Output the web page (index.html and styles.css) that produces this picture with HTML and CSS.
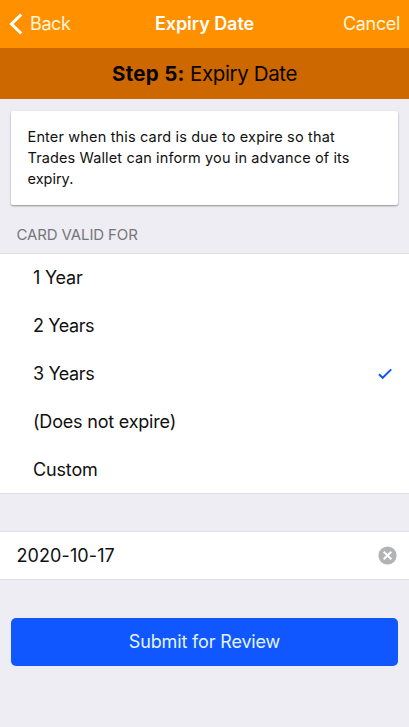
FILE: index.html
```html
<!DOCTYPE html>
<html lang="en">
<head>
<meta charset="utf-8">
<title>Expiry Date</title>
<link rel="stylesheet" href="styles.css">
</head>
<body>
<header class="nav">
  <a class="back"><svg width="14" height="22" viewBox="0 0 14 22"><path d="M12.2 1.5 2.5 11l9.7 9.5" fill="none" stroke="#fff" stroke-width="3"/></svg><span class="t">Back</span></a>
  <h1 class="t title">Expiry Date</h1>
  <a class="t cancel">Cancel</a>
</header>
<div class="step"><span class="t step-text"><b>Step 5:</b> Expiry Date</span></div>
<main>
  <p class="card"><span class="t l1">Enter when this card is due to expire so that</span><br><span class="t l2">Trades Wallet can inform you in advance of its</span><br><span class="t l3">expiry.</span></p>
  <h2 class="label"><span class="t label-text">CARD VALID FOR</span></h2>
  <ul class="list">
    <li><span class="t">1 Year</span></li>
    <li><span class="t years">2 Years</span></li>
    <li><span class="t years">3 Years</span><svg width="16" height="14" viewBox="0 0 16 14"><path d="M2 7.2 5.7 10.8 14.2 2.4" fill="none" stroke="#1155f5" stroke-width="2"/></svg></li>
    <li><span class="t wide">(Does not expire)</span></li>
    <li><span class="t custom">Custom</span></li>
  </ul>
  <div class="date"><span class="t">2020-10-17</span><svg width="19" height="19" viewBox="0 0 19 19"><circle cx="9.5" cy="9.5" r="9.1" fill="#b1b3b4"/><path d="m5.7 5.7 7.6 7.6M13.3 5.7l-7.6 7.6" stroke="#fff" stroke-width="2"/></svg></div>
  <button class="submit"><span class="t">Submit for Review</span></button>
</main>
</body>
</html>
```
FILE: styles.css
```css
* { box-sizing: border-box; }
body { margin: 0; height: 727px; overflow: hidden; background: #ededf3; color: #111; font-family: Inter, "Liberation Sans", sans-serif; font-size: 18px; }
.t { display: inline-block; white-space: nowrap; }
.nav { height: 48px; background: #ff9100; color: #fff; display: grid; grid-template-columns: 1fr auto 1fr; align-items: center; padding: 0 9px 1px; }
.back { display: flex; align-items: center; gap: 7px; letter-spacing: -0.4px; color: #fff6dc; }
.title { margin: 0; font-size: 18px; font-weight: 600; letter-spacing: -0.05px; }
.cancel { justify-self: end; letter-spacing: -0.35px; color: #fff6dc; }
.step { height: 51px; background: #cd6800; color: #080400; display: flex; align-items: center; justify-content: center; font-size: 20.5px; letter-spacing: -0.38px; }
.step b { letter-spacing: 0.3px; }
.card { margin: 12px 11px 0; height: 94px; padding: 15px 16.5px; background: #fff; border-radius: 2px; box-shadow: 0 1px 2px #0006; font-size: 14.5px; line-height: 21px; }
.l1 { letter-spacing: 0.16px; }
.l2 { letter-spacing: 0.12px; }
.label { margin: 0; height: 48px; padding: 20px 16.5px 0; font-size: 15px; line-height: 20px; font-weight: 400; letter-spacing: -0.12px; color: #77777b; }
.list { list-style: none; margin: 0; padding: 0; height: 241px; background: #fff; border-top: 1px solid #dfdfe4; border-bottom: 1px solid #dfdfe4; }
.list li { height: 48px; padding: 0 16px 1px 33px; display: flex; align-items: center; justify-content: space-between; letter-spacing: -0.2px; }
.list .years { letter-spacing: -0.4px; }
.list .custom { letter-spacing: -0.15px; }
.date { margin-top: 37px; height: 49px; padding: 0 12px 0 16.5px; background: #fff; border-top: 1px solid #dfdfe4; border-bottom: 1px solid #dfdfe4; display: flex; align-items: center; justify-content: space-between; letter-spacing: 0.1px; }
.submit { display: block; width: 387px; height: 48px; margin: 37.5px 11px 0; padding: 0 0 1px; border: 0; border-radius: 5px; background: #1157ff; color: #e2f5ff; font: inherit; letter-spacing: -0.15px; }
```
